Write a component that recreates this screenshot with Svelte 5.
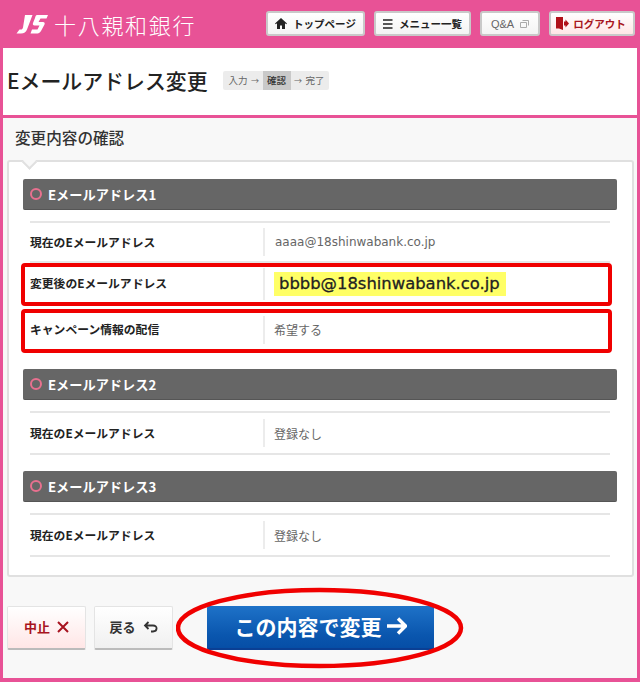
<script lang="ts">
  const navButtons = [
    { label: 'トップページ', icon: 'home', width: 99, kind: '' },
    { label: 'メニュー一覧', icon: 'menu', width: 97, kind: '' },
    { label: 'Q&A', icon: 'window', width: 60, kind: 'muted' },
    { label: 'ログアウト', icon: 'logout', width: 86, kind: 'danger' }
  ];

  const sections = [
    {
      title: 'Eメールアドレス1',
      rows: [
        { label: '現在のEメールアドレス', value: 'aaaa@18shinwabank.co.jp', height: 40, latin: true },
        { label: '変更後のEメールアドレス', value: 'bbbb@18shinwabank.co.jp', height: 43, strong: true },
        { label: 'キャンペーン情報の配信', value: '希望する', height: 47, last: true }
      ]
    },
    { title: 'Eメールアドレス2', rows: [{ label: '現在のEメールアドレス', value: '登録なし', height: 42 }] },
    { title: 'Eメールアドレス3', rows: [{ label: '現在のEメールアドレス', value: '登録なし', height: 42 }] }
  ];
</script>

<div class="page">
  <header class="top">
    <div class="brand">
      <svg class="logo" width="33" height="19" viewBox="0 0 33 19" aria-hidden="true">
        <path d="M9 0h7.500L11 14.500C10 17 8 18.500 5 18.500H.5L3.500 14.500H5C6 14.500 6.500 14 7 12.500z" fill="#fff" />
        <path d="M21 0H32L30.500 3.500H24.500L22.500 7H27C28.500 7 29 8 28.500 9.500L25 16C24 17.500 23 18.500 21.500 18.500H14.500L16 14.500H21.500L23.500 10.500H18.500C17 10.500 16.500 9.500 17 8L19 3C19.500 1 20 0 21 0z" fill="#fff" />
      </svg>
      <span class="brand-name">十八親和銀行</span>
    </div>
    <nav class="nav">
      {#each navButtons as b}
        <button type="button" class="nav-btn {b.kind}" style="width: {b.width}px">
          {#if b.icon === 'home'}
            <svg width="12" height="11" viewBox="0 0 12 11"><path d="M6 0 0 5.500l.8.800L2 5.200V11h3V7.500h2V11h3V5.200l1.200 1.100.8-.8z" fill="#222" /></svg>
          {:else if b.icon === 'menu'}
            <svg width="10" height="10" viewBox="0 0 10 10"><path d="M0 1h9.500M0 5h9.500M0 9h9.500" stroke="#222" stroke-width="1.500" fill="none" /></svg>
          {:else if b.icon === 'logout'}
            <svg width="13" height="13" viewBox="0 0 13 13"><path d="M0 0h7v13l-4-1.500H0z" fill="#b01018" /><path d="M8 4.500h1.500V2.500L13 6.500l-3.500 4v-2H8z" fill="#b01018" /></svg>
          {/if}
          <span>{b.label}</span>
          {#if b.icon === 'window'}
            <svg width="9" height="8" viewBox="0 0 9 8"><path d="M2.500.5h6v5M.5 2.500h6v5h-6z" stroke="#aaa" fill="none" /></svg>
          {/if}
        </button>
      {/each}
    </nav>
  </header>

  <div class="title-bar">
    <h1>Eメールアドレス変更</h1>
    <ol class="steps">
      <li>入力</li>
      <li class="arrow">→</li>
      <li class="current">確認</li>
      <li class="arrow">→</li>
      <li>完了</li>
    </ol>
  </div>

  <main class="content">
    <h2>変更内容の確認</h2>
    <div class="card">
      {#each sections as section}
        <section class="block">
          <h3><span class="ring"></span>{section.title}</h3>
          <dl class="rows">
            {#each section.rows as row}
              <div class="row" class:no-line={row.last} style="height: {row.height}px">
                <dt>{row.label}</dt>
                <dd class:tall={row.strong}>
                  {#if row.strong}
                    <span class="highlight">{row.value}</span>
                  {:else if row.latin}
                    <span class="latin">{row.value}</span>
                  {:else}
                    {row.value}
                  {/if}
                </dd>
              </div>
            {/each}
          </dl>
        </section>
      {/each}
    </div>

    <div class="actions">
      <button type="button" class="act cancel">中止
        <svg width="12" height="12" viewBox="0 0 12 12"><path d="M1 1l10 10M11 1 1 11" stroke="#a81420" stroke-width="2" fill="none" /></svg>
      </button>
      <button type="button" class="act back">戻る
        <svg width="15" height="12" viewBox="0 0 15 12"><path d="M5.500 1 2 4.500 5.500 8M2 4.500h8c5 0 4.500 6 0 6H8" stroke="#333" stroke-width="1.800" fill="none" /></svg>
      </button>
      <button type="button" class="act submit">この内容で変更
        <svg width="20" height="18" viewBox="0 0 20 18"><path d="M11 1.500 18.500 9 11 16.500M17.500 9H0" stroke="#fff" stroke-width="3.400" fill="none" /></svg>
      </button>
    </div>
  </main>

  <!-- red annotations drawn on top of the screenshot -->
  <div class="mark mark-a"></div>
  <div class="mark mark-b"></div>
  <svg class="mark-ellipse" width="290" height="84" viewBox="0 0 290 84">
    <ellipse cx="143.500" cy="42" rx="141.500" ry="38" fill="none" stroke="#f00000" stroke-width="4.500" />
  </svg>
</div>

<style>
  :global(body) {
    margin: 0;
  }

  .page {
    position: relative;
    box-sizing: border-box;
    width: 640px;
    height: 682px;
    display: flex;
    flex-direction: column;
    border: solid #e85296;
    border-width: 0 3px 4px;
    background: #fff;
    overflow: hidden;
    font-family: "Noto Sans CJK JP", "Open Sans", sans-serif;
    color: #222;
  }

  .top {
    height: 48px;
    flex-shrink: 0;
    display: flex;
    align-items: center;
    justify-content: space-between;
    padding: 0 2px 0 13px;
    background: #e85296;
  }

  .brand {
    display: flex;
    align-items: center;
    gap: 5px;
  }

  .brand-name {
    font-size: 22px;
    font-weight: 300;
    letter-spacing: 1.700px;
    color: #fff;
    line-height: 1;
  }

  .nav {
    display: flex;
    gap: 9px;
    margin-top: -1px;
  }

  .nav-btn {
    box-sizing: border-box;
    height: 25px;
    display: flex;
    align-items: center;
    justify-content: center;
    gap: 6px;
    padding: 0;
    border: 2px solid #c9c9c9;
    border-radius: 3px;
    background: linear-gradient(#fff, #f3f3f3);
    font: 700 10.500px "Noto Sans CJK JP", sans-serif;
    color: #222;
  }

  .nav-btn.muted {
    font: 400 11px "Liberation Sans", sans-serif;
    color: #666;
  }

  .nav-btn.danger {
    gap: 4px;
    padding-right: 2px;
    background: linear-gradient(#fff, #ffe6e6);
    color: #a81420;
  }

  .title-bar {
    box-sizing: border-box;
    height: 70px;
    flex-shrink: 0;
    display: flex;
    align-items: center;
    gap: 15px;
    padding: 0 0 2px 4px;
    border-bottom: 3px solid #e85296;
  }

  h1 {
    margin: 0;
    font-size: 20.900px;
    font-weight: 500;
    line-height: 1.2;
    color: #222;
  }

  .steps {
    display: flex;
    align-items: center;
    height: 19px;
    margin: 0;
    padding: 0 4px 0 6px;
    list-style: none;
    border-radius: 2px;
    background: #ececec;
    font-size: 9.500px;
    color: #666;
  }

  .steps li {
    padding: 0;
    line-height: 19px;
  }

  .steps .arrow {
    width: 15px;
    text-align: center;
    font-size: 8px;
  }

  .steps .current {
    width: 28px;
    text-align: center;
    background: #c9c9c9;
    font-weight: 500;
    color: #333;
  }

  .content {
    flex: 1;
    display: flex;
    flex-direction: column;
    padding: 0 0 0 4px;
    background: #f8f8f8;
  }

  h2 {
    margin: 10px 0 0;
    padding-left: 8px;
    height: 32px;
    font-size: 15.600px;
    font-weight: 500;
    line-height: 18px;
    color: #333;
  }

  .card {
    position: relative;
    box-sizing: border-box;
    width: 627px;
    height: 417px;
    padding: 17px 15px 0 14px;
    background: #fff;
    border: 2px solid #e0e0e0;
    border-radius: 3px;
  }

  /* little notch on the top edge of the card */
  .card::before {
    content: "";
    position: absolute;
    left: 15px;
    top: -7px;
    width: 9px;
    height: 9px;
    background: #f8f8f8;
    transform: rotate(45deg) translate(1px, 1px);
    border: solid #e0e0e0;
    border-width: 0 2px 2px 0;
  }

  .block {
    margin-bottom: 16px;
  }

  h3 {
    box-sizing: border-box;
    height: 31px;
    margin: 0 0 11px;
    display: flex;
    align-items: center;
    gap: 6px;
    padding-left: 7px;
    border-radius: 2px;
    background: #666;
    border-bottom: 1px solid #555;
    font-size: 13.200px;
    font-weight: 700;
    color: #fff;
  }

  .ring {
    box-sizing: border-box;
    width: 12px;
    height: 12px;
    border: 2px solid #e8708f;
    border-radius: 50%;
  }

  .rows {
    margin: 0 7px;
    border-top: 2px solid #e6e6e6;
  }

  .row {
    box-sizing: border-box;
    display: flex;
    align-items: center;
    border-bottom: 2px solid #e6e6e6;
  }

  .row.no-line {
    border-bottom: 0;
  }

  dt {
    box-sizing: border-box;
    width: 233px;
    padding-bottom: 2px;
    font-size: 11.800px;
    font-weight: 700;
    color: #222;
  }

  dd {
    box-sizing: border-box;
    flex: 1;
    margin: 0;
    padding-left: 9px;
    height: 28px;
    display: flex;
    align-items: center;
    border-left: 2px solid #ececec;
    font-size: 12px;
    color: #666;
  }

  dd.tall {
    height: 32px;
  }

  .latin {
    margin-left: 1px;
    font-family: "DejaVu Sans", "Noto Sans CJK JP", sans-serif;
  }

  .highlight {
    padding: 0 6px 0 5px;
    line-height: 24px;
    background: #ffff66;
    font-family: "DejaVu Sans", "Noto Sans CJK JP", sans-serif;
    font-size: 16.400px;
    -webkit-text-stroke: 0.3px #222;
    color: #222;
  }

  .actions {
    display: flex;
    gap: 8px;
    margin-top: 29px;
  }

  .act {
    box-sizing: border-box;
    width: 79px;
    height: 44px;
    display: flex;
    align-items: center;
    justify-content: center;
    gap: 7px;
    padding: 0 0 2px;
    border: 1px solid #e4e4e4;
    border-bottom: 2px solid #bbb;
    border-radius: 2px;
    font: 700 13px "Noto Sans CJK JP", sans-serif;
  }

  .cancel {
    background: linear-gradient(#fff, #ffe6e6);
    color: #a81420;
  }

  .back {
    background: linear-gradient(#fff, #f0f0f0);
    color: #333;
  }

  .submit {
    width: 227px;
    margin-left: 26px;
    gap: 5px;
    border: 0;
    background: linear-gradient(#1e72c8, #0a56ae 70%, #064ea6);
    border-bottom: 2px solid #0a3f94;
    font-size: 21px;
    color: #fff;
  }

  .mark {
    position: absolute;
    box-sizing: border-box;
    left: 18px;
    width: 591px;
    border: 4.500px solid #f00000;
    border-radius: 4px;
  }

  .mark-a {
    top: 263px;
    height: 43px;
  }

  .mark-b {
    top: 309px;
    height: 44px;
  }

  .mark-ellipse {
    position: absolute;
    left: 173px;
    top: 586px;
  }
</style>
